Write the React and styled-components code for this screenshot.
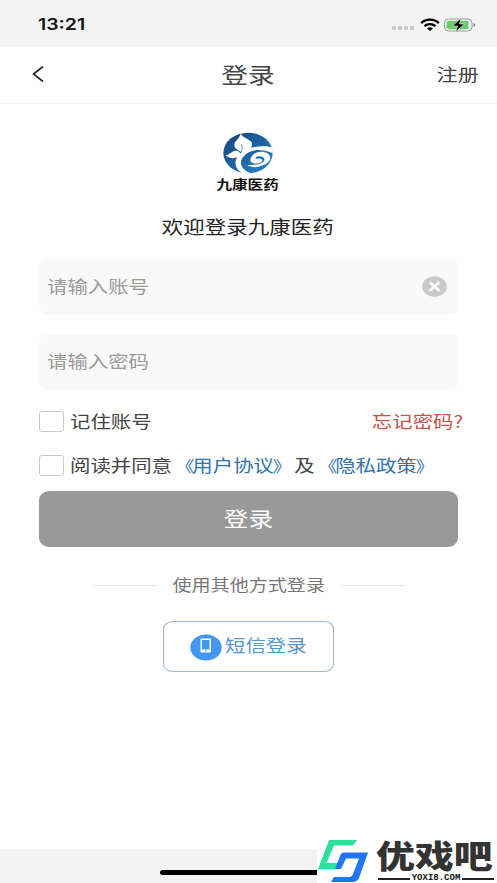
import React from "react"
import styled, { createGlobalStyle } from "styled-components";

const GlobalStyle = createGlobalStyle`
    * {
        box-sizing: border-box;
    }
    body {
        margin: 0;
        background: #fff;
        font-family: "Liberation Sans", "Noto Sans CJK SC", sans-serif;
    }
`;

const Page = styled.div`
    width: 100%;
    height: 883px;
    display: flex;
    flex-direction: column;
    overflow: hidden;
    background: #fefefe;
`;

// text is set a little wider than its natural width
const Text = styled.span`
    display: inline-block;
    white-space: nowrap;
    font-family: ${props => props.$latin ? `"Inter", sans-serif` : `"Noto Sans CJK SC", sans-serif`};
    font-size: ${props => props.$size || 16.8}px;
    font-weight: ${props => props.$weight || 400};
    line-height: ${props => props.$line || 1.2};
    color: ${props => props.$color || "#444"};
    transform: scaleX(1.215);
    transform-origin: ${props => props.$origin || "center"};
`;

const StatusBar = styled.div`
    height: 47px;
    padding: 2px 21px 0 38px;
    display: flex;
    align-items: center;
    justify-content: space-between;
    background: #f3f3f3;
`;

const StatusIcons = styled.div`
    display: flex;
    align-items: center;
    gap: 4px;
`;

const Dots = styled.div`
    display: flex;
    gap: 2px;
    margin: 7px 2px 0 0;
`;

const Dot = styled.i`
    width: 4px;
    height: 4px;
    border-radius: 1px;
    background: #c8c8c8;
`;

const Header = styled.header`
    height: 57px;
    padding: 0 18px 3px 31px;
    display: grid;
    grid-template-columns: 1fr auto 1fr;
    align-items: center;
    border-bottom: 1px solid #f2f2f2;
`;

const HeaderRight = styled.div`
    padding-top: 1px;
    display: flex;
    justify-content: flex-end;
`;

const HeaderTitle = styled.div`
    margin-right: 13px;
`;

const Content = styled.main`
    flex: 1;
    padding: 28px 39px 0;
    display: flex;
    flex-direction: column;
`;

const Brand = styled.div`
    height: 127px;
    padding-right: 1px;
    display: flex;
    flex-direction: column;
    align-items: center;
`;

const BrandName = styled.div`
    height: 18px;
    margin: 1px 1px 0 0;
    line-height: 18px;
`;

const Welcome = styled.div`
    margin-top: 23px;
    line-height: 24px;
`;

const Field = styled.div`
    height: 56px;
    margin-bottom: 19px;
    padding: 0 11px 2px 8px;
    display: flex;
    align-items: center;
    justify-content: space-between;
    border-radius: 10px / 8px;
    background: #f9f9f9;
`;

const Options = styled.div`
    margin: -10px 0 4px;
`;

const Option = styled.div`
    height: 44px;
    display: flex;
    align-items: center;
    gap: 6px;
`;

const CheckBox = styled.span`
    width: 25px;
    height: 21px;
    border: 1px solid #c9c9c9;
    border-radius: 3px;
    background: #fff;
`;

const Forgot = styled.div`
    margin: 0 -5px 0 auto;
`;

const Link = styled.span`
    color: #3273ac;
`;

const Bracket = styled.span`
    display: inline-block;
    width: 16.8px;
    font-size: 15.5px;
    text-indent: ${props => props.$open ? 3 : -1}px;
`;

const Submit = styled.button`
    height: 56px;
    border: 0;
    padding: 0 1px 1px 0;
    border-radius: 10px / 9px;
    background: #999;
`;

const Divider = styled.div`
    height: 24px;
    margin: 26px 53px 0;
    display: flex;
    align-items: center;
    justify-content: space-between;
`;

const Line = styled.i`
    width: 65px;
    height: 1px;
    background: #e6e6e6;
`;

const SmsButton = styled.button`
    width: 171px;
    height: 51px;
    margin: 24px 0 0 124px;
    padding: 1px 0 0 26px;
    display: flex;
    align-items: center;
    gap: 3px;
    border: 1px solid #9db9cf;
    border-radius: 10px / 8px;
    background: #fff;
`;

const SmsLabel = styled.span`
    margin-top: -4px;
`;

const Footer = styled.footer`
    height: 34px;
    padding-left: 160px;
    display: flex;
    align-items: flex-end;
    background: #f3f3f3;
`;

const HomeBar = styled.div`
    width: 190px;
    height: 5px;
    margin-bottom: 8px;
    border-radius: 3px;
    background: #000;
`;

// sits over the corner of the page
const Watermark = styled.div`
    position: absolute;
    left: 317px;
    top: 836px;
    width: 180px;
    height: 47px;
    display: flex;
    background: #fefefe;
`;

const MarkText = styled.div`
    width: 116px;
    margin-left: 8px;
`;

const MarkName = styled.div`
    height: 35px;
    margin-left: -2px;
    display: flex;
    align-items: center;
`;

const MarkSite = styled.div`
    height: 9px;
    margin-top: 3px;
    display: flex;
    align-items: center;
    justify-content: space-between;
    font: bold 9px/9px "Liberation Mono", monospace;
    color: #111;
`;

const MarkLine = styled.i`
    width: 32px;
    height: 2px;
    background: #222;
`;

const WifiIcon = () => (
    <svg width="20" height="14" viewBox="0 0 20 14" fill="none" stroke="#000" strokeWidth="2.3">
        <path d="M1.2 5.1C6 .5 14 .5 18.8 5.1" />
        <path d="M4.5 8.2C7.6 5.3 12.4 5.3 15.5 8.2" />
        <path d="M7 10.4Q10 8 13 10.4L10 13Z" fill="#000" stroke="none" />
    </svg>
);

const BatteryIcon = () => (
    <svg width="32" height="16" viewBox="0 0 32 16">
        <rect x=".5" y="2" width="27.5" height="12" rx="4" fill="#f8f8f8" stroke="#999" />
        <rect x="2.5" y="3.8" width="22" height="8.4" rx="2" fill="#67cb6b" />
        <path d="M29.5 6v4q1.800-.7 1.800-2T29.500 6Z" fill="#888" />
        <path d="M17 1 8.500 9h5l-2 6L20.500 7h-5Z" fill="#000" stroke="#f3f3f3" strokeWidth=".6" />
    </svg>
);

const BackIcon = () => (
    <svg width="14" height="18" viewBox="0 0 14 18" fill="none" stroke="#222" strokeWidth="1.6">
        <path d="M12 1.5 2.5 9 12 16.5" />
    </svg>
);

const BrandLogo = () => (
    <svg width="50" height="42" viewBox="0 0 150 126">
        <defs>
            <linearGradient id="brand" x1="0" y1="0" x2="1" y2="1">
                <stop offset="0" stopColor="#174078" />
                <stop offset=".55" stopColor="#1f66a8" />
                <stop offset="1" stopColor="#2a8acb" />
            </linearGradient>
        </defs>
        <ellipse cx="75" cy="63" rx="74" ry="61" fill="url(#brand)" />
        <g fill="#fff">
            <path d="M53 4C57 18 84 22 87 34 89 49 75 60 56 61 49 55 35 53 34 38 34 27 52 19 53 4Z" />
            <path d="M8 69C20 69 27 55 39 56 49 57 52 63 53 67 45 81 21 83 8 69Z" />
            <path d="M150 47C115 37 56 45 40 80 31 101 45 119 64 125L83 124C57 112 45 94 61 74 78 52 112 48 149 64Z" />
            <path d="M82 85C84 61 115 52 135 65 151 77 139 96 111 103 95 108 82 105 73 99 91 99 112 98 121 89 130 80 120 73 108 73 96 73 93 81 105 80 116 78 124 86 112 92 100 98 82 94 82 85Z" />
        </g>
        <path d="M55 60Q59 48 56 38" fill="none" stroke="#2063a1" strokeWidth="2" />
    </svg>
);

const ClearIcon = () => (
    <svg width="25" height="21" viewBox="0 0 25 21">
        <ellipse cx="12.5" cy="10.5" rx="12.3" ry="10.3" fill="#cacaca" />
        <path d="M8.500 7 16.500 14M16.500 7 8.500 14" stroke="#fff" strokeWidth="2.600" strokeLinecap="round" />
    </svg>
);

const PhoneIcon = () => (
    <svg width="32" height="27" viewBox="0 0 32 27">
        <ellipse cx="16" cy="13.5" rx="15.7" ry="13" fill="#4396f2" />
        <rect x="10.5" y="4.5" width="10.5" height="14" rx="1" fill="#fff" />
        <rect x="12" y="6" width="7.5" height="9.5" fill="#4396f2" />
        <rect x="15" y="16.3" width="1.6" height="1.2" fill="#4396f2" />
    </svg>
);

const MarkLogo = () => (
    <svg width="53" height="47" viewBox="0 0 53 47">
        <path d="M12 4H40L36 9.500H17L9.500 27H21L18 33H1Z" fill="#2de09b" />
        <path d="M27 16.500H51L42 42Q40 46 36 46H14L17 41H33Q35 41 36 38L42 22.500H29L24 33H18L23 20Q24 16.500 27 16.500Z" fill="#2275f6" />
    </svg>
);

const App = () => {
    return (
        <Page>
            <GlobalStyle />
            <StatusBar>
                <Text $latin $size={16} $weight={600} $color="#111" $origin="left center">13:21</Text>
                <StatusIcons>
                    <Dots>{[0, 1, 2, 3].map(v => <Dot key={v} />)}</Dots>
                    <WifiIcon />
                    <BatteryIcon />
                </StatusIcons>
            </StatusBar>
            <Header>
                <BackIcon />
                <HeaderTitle><Text $size={22}>登录</Text></HeaderTitle>
                <HeaderRight><Text $size={17.4} $origin="right center">注册</Text></HeaderRight>
            </Header>
            <Content>
                <Brand>
                    <BrandLogo />
                    <BrandName><Text $size={12.8} $weight={700} $color="#111">九康医药</Text></BrandName>
                    <Welcome><Text $size={17.7} $color="#222">欢迎登录九康医药</Text></Welcome>
                </Brand>
                <Field>
                    <Text $color="#999" $origin="left center">请输入账号</Text>
                    <ClearIcon />
                </Field>
                <Field>
                    <Text $color="#999" $origin="left center">请输入密码</Text>
                </Field>
                <Options>
                    <Option>
                        <CheckBox />
                        <Text $origin="left center">记住账号</Text>
                        <Forgot><Text $color="#c4554d" $origin="right center">忘记密码?</Text></Forgot>
                    </Option>
                    <Option>
                        <CheckBox />
                        <Text $origin="left center">
                            阅读并同意
                            <Link><Bracket $open>《</Bracket>用户协议<Bracket>》</Bracket></Link>
                            及
                            <Link><Bracket $open>《</Bracket>隐私政策<Bracket>》</Bracket></Link>
                        </Text>
                    </Option>
                </Options>
                <Submit><Text $size={20.4} $color="#fff">登录</Text></Submit>
                <Divider>
                    <Line />
                    <Text $size={15.7} $color="#777">使用其他方式登录</Text>
                    <Line />
                </Divider>
                <SmsButton>
                    <PhoneIcon />
                    <SmsLabel><Text $color="#5397ce" $origin="left center">短信登录</Text></SmsLabel>
                </SmsButton>
            </Content>
            <Footer>
                <HomeBar />
            </Footer>
            <Watermark>
                <MarkLogo />
                <MarkText>
                    <MarkName><Text $size={32} $weight={900} $line={1} $color="#333" $origin="left center">优戏吧</Text></MarkName>
                    <MarkSite><MarkLine />YOXI8.COM<MarkLine /></MarkSite>
                </MarkText>
            </Watermark>
        </Page>
    )
};

export default App
